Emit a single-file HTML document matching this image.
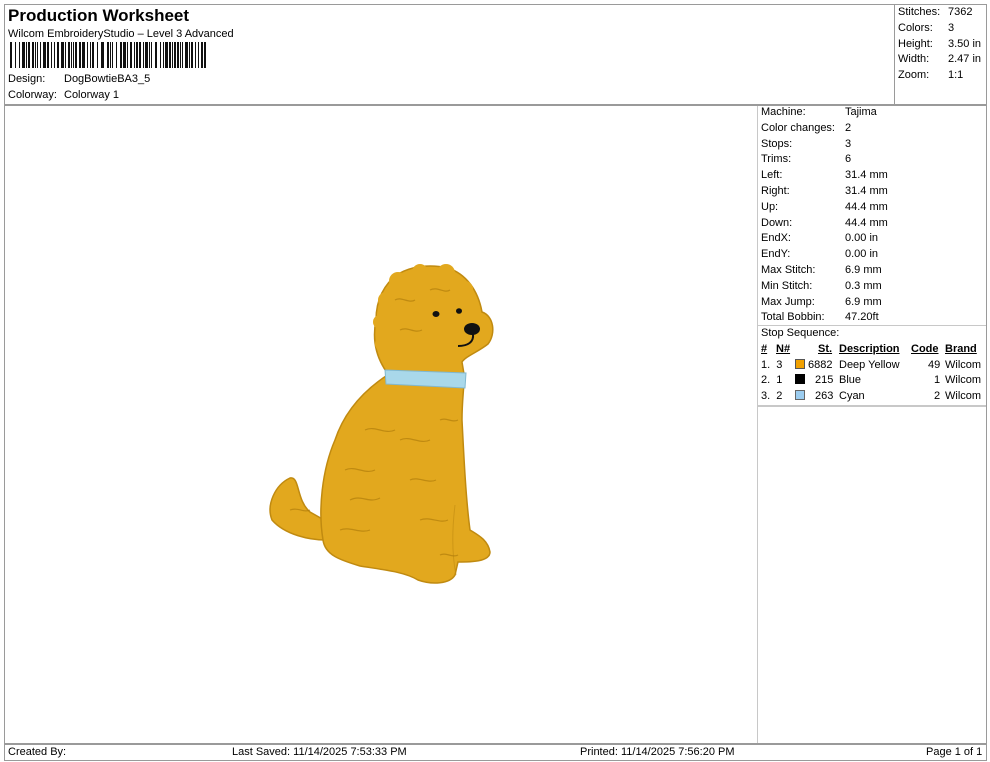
<!DOCTYPE html>
<html><head><meta charset="utf-8"><style>
*{margin:0;padding:0;box-sizing:border-box}
body{width:990px;height:762px;background:#fff;font-family:"Liberation Sans",Arial,sans-serif;color:#000;position:relative;overflow:hidden;font-size:11px}
.a{position:absolute;white-space:nowrap;line-height:13px}
.b{position:absolute;background:#9a9a9a}
</style></head><body>
<div class="b" style="left:4px;top:4px;width:983px;height:1px"></div>
<div class="b" style="left:4px;top:4px;width:1px;height:757px"></div>
<div class="b" style="left:986px;top:4px;width:1px;height:757px"></div>
<div class="b" style="left:4px;top:104px;width:983px;height:2px"></div>
<div class="b" style="left:894px;top:4px;width:1px;height:100px"></div>
<div class="b" style="left:757px;top:106px;width:1px;height:638px;background:#c8c8c8"></div>
<div class="b" style="left:757px;top:325px;width:229px;height:1px;background:#c8c8c8"></div>
<div class="b" style="left:757px;top:405px;width:229px;height:2px;background:#c8c8c8"></div>
<div class="b" style="left:4px;top:743px;width:983px;height:2px"></div>
<div class="b" style="left:4px;top:760px;width:983px;height:1px"></div>

<div class="a" style="left:8px;top:7px;font-size:17px;font-weight:bold;line-height:18px">Production Worksheet</div>
<div class="a" style="left:8px;top:28px">Wilcom EmbroideryStudio – Level 3 Advanced</div>
<svg style="position:absolute;left:10px;top:42px" width="200" height="26" id="bc"></svg>
<div class="a" style="left:8px;top:73px">Design:</div><div class="a" style="left:64px;top:73px">DogBowtieBA3_5</div>
<div class="a" style="left:8px;top:89px">Colorway:</div><div class="a" style="left:64px;top:89px">Colorway 1</div>

<div class="a" style="left:898px;top:6px">Stitches:</div><div class="a" style="left:948px;top:6px">7362</div>
<div class="a" style="left:898px;top:22px">Colors:</div><div class="a" style="left:948px;top:22px">3</div>
<div class="a" style="left:898px;top:38px">Height:</div><div class="a" style="left:948px;top:38px">3.50 in</div>
<div class="a" style="left:898px;top:53px">Width:</div><div class="a" style="left:948px;top:53px">2.47 in</div>
<div class="a" style="left:898px;top:69px">Zoom:</div><div class="a" style="left:948px;top:69px">1:1</div>

<div id="st"></div>
<div class="a" style="left:761px;top:327px">Stop Sequence:</div>
<div class="a" style="left:761px;top:343px;font-weight:bold;text-decoration:underline">#</div>
<div class="a" style="left:776px;top:343px;font-weight:bold;text-decoration:underline">N#</div>
<div class="a" style="left:818px;top:343px;font-weight:bold;text-decoration:underline">St.</div>
<div class="a" style="left:839px;top:343px;font-weight:bold;text-decoration:underline">Description</div>
<div class="a" style="left:911px;top:343px;font-weight:bold;text-decoration:underline">Code</div>
<div class="a" style="left:945px;top:343px;font-weight:bold;text-decoration:underline">Brand</div>

<div class="a" style="left:761px;top:359px">1.&nbsp; 3</div><div style="position:absolute;left:795px;top:359px;width:10px;height:10px;background:#f0a000;border:1px solid #555"></div><div class="a" style="left:808px;top:359px">6882</div><div class="a" style="left:839px;top:359px">Deep Yellow</div><div class="a" style="left:928px;top:359px">49</div><div class="a" style="left:945px;top:359px">Wilcom</div>
<div class="a" style="left:761px;top:374px">2.&nbsp; 1</div><div style="position:absolute;left:795px;top:374px;width:10px;height:10px;background:#000"></div><div class="a" style="left:815px;top:374px">215</div><div class="a" style="left:839px;top:374px">Blue</div><div class="a" style="left:934px;top:374px">1</div><div class="a" style="left:945px;top:374px">Wilcom</div>
<div class="a" style="left:761px;top:390px">3.&nbsp; 2</div><div style="position:absolute;left:795px;top:390px;width:10px;height:10px;background:#9ccdf0;border:1px solid #666"></div><div class="a" style="left:815px;top:390px">263</div><div class="a" style="left:839px;top:390px">Cyan</div><div class="a" style="left:934px;top:390px">2</div><div class="a" style="left:945px;top:390px">Wilcom</div>

<div class="a" style="left:8px;top:746px">Created By:</div>
<div class="a" style="left:232px;top:746px">Last Saved: 11/14/2025 7:53:33 PM</div>
<div class="a" style="left:580px;top:746px">Printed: 11/14/2025 7:56:20 PM</div>
<div class="a" style="left:926px;top:746px">Page 1 of 1</div>

<svg style="position:absolute;left:0;top:0" width="990" height="762">
<g fill="#e2a81e" stroke="#c08a10" stroke-width="1.5">
<path d="M290,478 C300,476 296,500 310,512 L324,520 L326,540 C310,540 285,535 272,520 C266,505 275,485 290,478Z"/>
<path d="M386,376 C365,390 345,410 335,440 C322,470 318,510 323,540 C325,555 340,560 360,566 C385,570 405,572 418,580 C432,585 450,584 455,575 L458,562 C470,562 490,562 490,552 C488,540 478,535 470,530 C466,500 464,460 462,420 C462,400 464,390 464,378 Z"/>
<path d="M388,374 C376,358 372,340 376,320 C376,300 384,284 398,274 C412,266 430,264 448,268 C466,274 478,290 482,312 C494,316 496,334 488,344 C478,352 466,356 462,362 L464,374 Z"/>
</g>
<g fill="#e2a81e">
<circle cx="386" cy="300" r="8"/><circle cx="380" cy="322" r="7"/><circle cx="398" cy="281" r="9"/><circle cx="420" cy="272" r="8"/><circle cx="446" cy="273" r="9"/><circle cx="465" cy="289" r="8"/><circle cx="382" cy="344" r="7"/>
</g>
<path d="M455,505 C452,530 452,555 456,575" stroke="#c08a10" stroke-width="1" fill="none" opacity=".6"/>
<g fill="none" stroke="#b07e0c" stroke-width="1.2" opacity=".7">
<path d="M345,470 c10,-5 20,5 30,0 M350,500 c12,-6 18,4 30,-2 M340,530 c10,-4 20,4 30,0 M400,440 c10,-5 20,5 30,0 M410,480 c8,-4 18,4 26,0 M420,520 c10,-4 20,4 28,0 M395,300 c6,-4 14,4 20,0 M400,330 c8,-4 14,4 22,0 M430,290 c8,-4 14,4 20,0 M365,430 c10,-5 20,5 30,0 M440,420 c6,-3 12,3 18,0 M440,555 c6,-3 12,3 18,0 M290,510 c8,-3 14,3 20,0"/>
</g>
<path d="M385,370 L466,373 L465,388 L386,384 Z" fill="#a9d8ea" stroke="#80b8d0"/>
<ellipse cx="436" cy="314" rx="3.5" ry="3" fill="#111"/>
<ellipse cx="459" cy="311" rx="3" ry="2.8" fill="#111"/>
<ellipse cx="472" cy="329" rx="8" ry="6" fill="#111"/>
<path d="M473,334 C474,342 468,346 458,346" stroke="#111" stroke-width="2" fill="none"/>
</svg>
<script>
var s=document.getElementById('bc'),w=[2,1,1,3,1,2,2,1,1,1,3,2,1,1,2,3,1,2,1,1,2,2,3,1,1,2,1,3,2,1,1,1,2,3,1,2,1,2,2,1,3,1,1,2,1,1,3,2,1,2,2,1,1,3,1,2,1,1,2,2,3,1,2,1,1,2],x=0,h='';
for(var i=0;i<w.length&&x<198;i++){var bw=w[i],gw=w[(i*7+3)%w.length];h+='<rect x="'+x+'" y="0" width="'+bw+'" height="26" fill="#111"/>';x+=bw+gw;}
s.innerHTML=h;
var L=[["Machine:","Tajima"],["Color changes:","2"],["Stops:","3"],["Trims:","6"],["Left:","31.4 mm"],["Right:","31.4 mm"],["Up:","44.4 mm"],["Down:","44.4 mm"],["EndX:","0.00 in"],["EndY:","0.00 in"],["Max Stitch:","6.9 mm"],["Min Stitch:","0.3 mm"],["Max Jump:","6.9 mm"],["Total Bobbin:","47.20ft"]],t='';
for(var j=0;j<L.length;j++){var y=106+j*15.8;t+='<div class="a" style="left:761px;top:'+y+'px">'+L[j][0]+'</div><div class="a" style="left:845px;top:'+y+'px">'+L[j][1]+'</div>';}
document.getElementById('st').innerHTML=t;
</script>
</body></html>
